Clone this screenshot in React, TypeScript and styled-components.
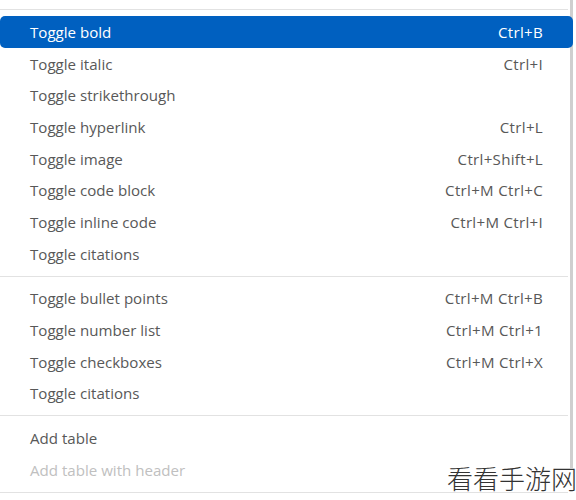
import React from "react";
import styled, { createGlobalStyle } from "styled-components";

const GlobalStyle = createGlobalStyle`
  html, body {
    margin: 0;
    padding: 0;
    background: #ffffff;
  }
  body {
    font-family: "Open Sans", "Noto Sans", sans-serif;
  }
`;

const Page = styled.div`
  position: relative;
  width: 576px;
  height: 500px;
  overflow: hidden;
  background: #ffffff;
`;

const Menu = styled.ul`
  position: relative;
  z-index: 1;
  list-style: none;
  margin: 0;
  padding: 3px 3px 0 0;
  width: 576px;
  box-sizing: border-box;
`;

const Separator = styled.li`
  height: 1px;
  margin: 6px 5px 6px 0;
  background: #e2e2e2;
`;

const Item = styled.li<{ $active?: boolean; $disabled?: boolean }>`
  display: flex;
  align-items: center;
  justify-content: space-between;
  height: 31.7px;
  padding: 0 30px 0 30px;
  border-radius: 5px;
  font-size: 15.1px;
  background: ${(p) => (p.$active ? "#0060c0" : "transparent")};
  color: ${(p) => (p.$active ? "#ffffff" : p.$disabled ? "#c0c0c0" : "#585858")};
`;

const Label = styled.span``;

const Keys = styled.span`
  letter-spacing: 0.3px;
`;

const Scrollbar = styled.div`
  position: absolute;
  top: 0;
  right: 3px;
  width: 3px;
  height: 468px;
  background: #cfcfcf;
`;

const Watermark = styled.div`
  position: absolute;
  z-index: 2;
  right: -1px;
  bottom: 4px;
  font-family: "Noto Sans CJK SC", sans-serif;
  font-weight: 300;
  font-size: 26px;
  color: #333333;
`;

type Entry = { label: string; keys?: string; active?: boolean; disabled?: boolean } | "sep";

const entries: Entry[] = [
  "sep",
  { label: "Toggle bold", keys: "Ctrl+B", active: true },
  { label: "Toggle italic", keys: "Ctrl+I" },
  { label: "Toggle strikethrough" },
  { label: "Toggle hyperlink", keys: "Ctrl+L" },
  { label: "Toggle image", keys: "Ctrl+Shift+L" },
  { label: "Toggle code block", keys: "Ctrl+M Ctrl+C" },
  { label: "Toggle inline code", keys: "Ctrl+M Ctrl+I" },
  { label: "Toggle citations" },
  "sep",
  { label: "Toggle bullet points", keys: "Ctrl+M Ctrl+B" },
  { label: "Toggle number list", keys: "Ctrl+M Ctrl+1" },
  { label: "Toggle checkboxes", keys: "Ctrl+M Ctrl+X" },
  { label: "Toggle citations" },
  "sep",
  { label: "Add table" },
  { label: "Add table with header", disabled: true },
  "sep",
];

export default function App() {
  return (
    <Page>
      <GlobalStyle />
      <Scrollbar />
      <Menu>
        {entries.map((e, i) =>
          e === "sep" ? (
            <Separator key={i} />
          ) : (
            <Item key={i} $active={e.active} $disabled={e.disabled}>
              <Label>{e.label}</Label>
              {e.keys && <Keys>{e.keys}</Keys>}
            </Item>
          )
        )}
      </Menu>
      <Watermark>看看手游网</Watermark>
    </Page>
  );
}
